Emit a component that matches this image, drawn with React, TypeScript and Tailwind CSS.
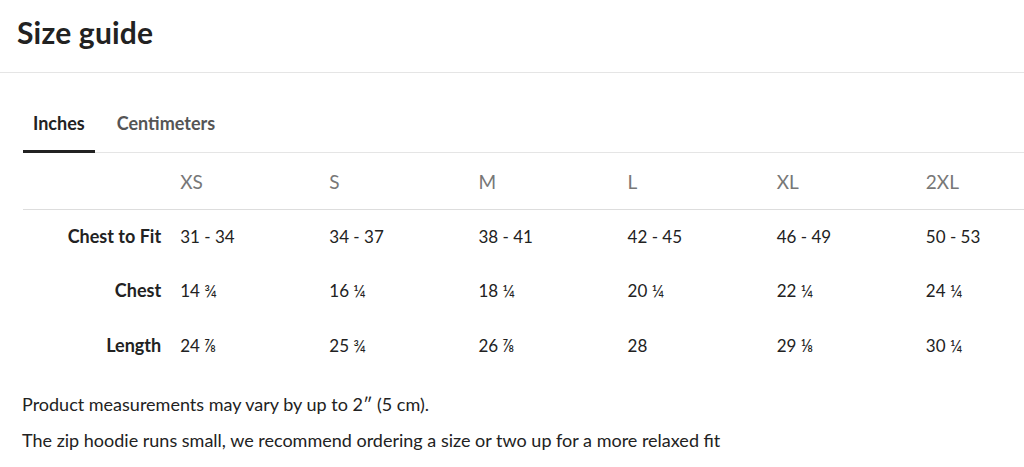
import React from "react";

const sizes = ["XS", "S", "M", "L", "XL", "2XL"];
const rows: { label: string; values: string[] }[] = [
  { label: "Chest to Fit", values: ["31 - 34", "34 - 37", "38 - 41", "42 - 45", "46 - 49", "50 - 53"] },
  { label: "Chest", values: ["14 ¾", "16 ¼", "18 ¼", "20 ¼", "22 ¼", "24 ¼"] },
  { label: "Length", values: ["24 ⅞", "25 ¾", "26 ⅞", "28", "29 ⅛", "30 ¼"] },
];

export default function App() {
  return (
    <div className="w-[1024px] h-[467px] overflow-hidden bg-white text-[#222] font-['Lato',_'Open_Sans',_sans-serif]">
      <div className="h-[73px] border-b border-[#e5e5e5] px-[17px] pt-[13px]">
        <h1 className="text-[30px] font-bold leading-[38px] tracking-[0.2px] text-[#222]">Size guide</h1>
      </div>
      <div className="pl-[23px]">
        <div className="flex h-[80px] items-end border-b border-[#e5e5e5]">
          <div className="-mb-px flex h-[56px] items-center border-b-[3px] border-[#222] px-[10px] pb-[1px] text-[18px] font-bold text-[#222]">
            Inches
          </div>
          <div className="flex h-[56px] items-center px-[22px] pb-[1px] text-[18px] font-bold text-[#555]">
            Centimeters
          </div>
        </div>
        <table className="table-fixed border-collapse w-[1043px]">
          <colgroup>
            <col className="w-[148px]" />
            {sizes.map((s) => (
              <col key={s} className="w-[149px]" />
            ))}
          </colgroup>
          <thead>
            <tr className="h-[56px] border-b border-[#ddd]">
              <th></th>
              {sizes.map((s) => (
                <th key={s} className="pl-[9px] pt-[2px] text-left text-[19px] font-normal text-[#777]">
                  {s}
                </th>
              ))}
            </tr>
          </thead>
          <tbody>
            {rows.map((r) => (
              <tr key={r.label} className="h-[54.5px]">
                <td className="pr-[10px] text-right text-[18px] font-bold text-[#222]">{r.label}</td>
                {r.values.map((v, i) => (
                  <td key={i} className="pl-[9px] text-[17px] text-[#222]">
                    {v}
                  </td>
                ))}
              </tr>
            ))}
          </tbody>
        </table>
      </div>
      <div className="px-[22px] pt-[19px] text-[18px] text-[#222]">
        <p className="leading-[24px]">Product measurements may vary by up to 2″ (5 cm).</p>
        <p className="mt-[12px] leading-[24px]">
          The zip hoodie runs small, we recommend ordering a size or two up for a more relaxed fit
        </p>
      </div>
    </div>
  );
}
